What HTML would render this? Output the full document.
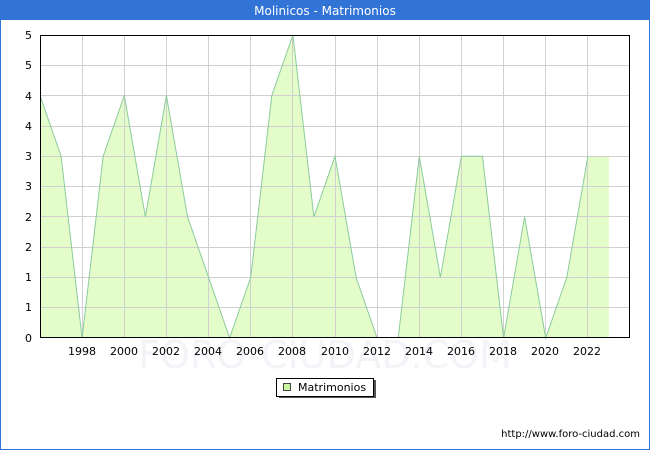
<!DOCTYPE html>
<html><head><style>
html,body{margin:0;padding:0;width:650px;height:450px;overflow:hidden;background:#fff;font-family:"DejaVu Sans","Liberation Sans",sans-serif;}
</style></head><body>
<svg width="650" height="450" xmlns="http://www.w3.org/2000/svg" font-family="DejaVu Sans, Liberation Sans, sans-serif">
<rect x="0" y="0" width="650" height="450" fill="#fff"/>
<rect x="0.5" y="0.5" width="649" height="449" fill="none" stroke="#3273d6" stroke-width="1"/>
<rect x="0" y="0" width="650" height="20" fill="#3273d6"/>
<text x="325" y="15" fill="#fff" font-size="12" text-anchor="middle">Molinicos - Matrimonios</text>
<text x="325" y="368" fill="#f3f3f8" font-size="38" text-anchor="middle">FORO-CIUDAD.COM</text>
<polygon fill="#e3fcca" points="40,95.6 61.1,156.2 82.1,338 103.2,156.2 124.3,95.6 145.4,216.8 166.4,95.6 187.5,216.8 208.6,277.4 229.6,338 250.7,277.4 271.8,95.6 292.9,35 313.9,216.8 335,156.2 356.1,277.4 377.1,338 398.2,338 419.3,156.2 440.4,277.4 461.4,156.2 482.5,156.2 503.6,338 524.6,216.8 545.7,338 566.8,277.4 587.9,156.2 608.9,156.2 608.9,338 40,338"/>
<g stroke="#d0d0d0" stroke-width="1">
<line x1="40" x2="630" y1="65.5" y2="65.5"/><line x1="40" x2="630" y1="95.5" y2="95.5"/><line x1="40" x2="630" y1="126.5" y2="126.5"/><line x1="40" x2="630" y1="156.5" y2="156.5"/><line x1="40" x2="630" y1="186.5" y2="186.5"/><line x1="40" x2="630" y1="216.5" y2="216.5"/><line x1="40" x2="630" y1="247.5" y2="247.5"/><line x1="40" x2="630" y1="277.5" y2="277.5"/><line x1="40" x2="630" y1="307.5" y2="307.5"/>
<line y1="35" y2="338" x1="82.5" x2="82.5"/><line y1="35" y2="338" x1="124.5" x2="124.5"/><line y1="35" y2="338" x1="166.5" x2="166.5"/><line y1="35" y2="338" x1="208.5" x2="208.5"/><line y1="35" y2="338" x1="250.5" x2="250.5"/><line y1="35" y2="338" x1="292.5" x2="292.5"/><line y1="35" y2="338" x1="335.5" x2="335.5"/><line y1="35" y2="338" x1="377.5" x2="377.5"/><line y1="35" y2="338" x1="419.5" x2="419.5"/><line y1="35" y2="338" x1="461.5" x2="461.5"/><line y1="35" y2="338" x1="503.5" x2="503.5"/><line y1="35" y2="338" x1="545.5" x2="545.5"/><line y1="35" y2="338" x1="587.5" x2="587.5"/>
</g>
<polyline fill="none" stroke="#8ccb9c" stroke-width="1" points="40,95.6 61.1,156.2 82.1,338 103.2,156.2 124.3,95.6 145.4,216.8 166.4,95.6 187.5,216.8 208.6,277.4 229.6,338 250.7,277.4 271.8,95.6 292.9,35 313.9,216.8 335,156.2 356.1,277.4 377.1,338"/>
<polyline fill="none" stroke="#8ccb9c" stroke-width="1" points="398.2,338 419.3,156.2 440.4,277.4 461.4,156.2 482.5,156.2 503.6,338 524.6,216.8 545.7,338 566.8,277.4 587.9,156.2"/>
<rect x="40.5" y="35.5" width="589" height="302" fill="none" stroke="#000" stroke-width="1"/>
<g font-size="11" fill="#000" text-anchor="end">
<text x="32" y="39">5</text><text x="32" y="69">5</text><text x="32" y="100">4</text><text x="32" y="130">4</text><text x="32" y="160">3</text><text x="32" y="190">3</text><text x="32" y="221">2</text><text x="32" y="251">2</text><text x="32" y="281">1</text><text x="32" y="311">1</text><text x="32" y="342">0</text>
</g>
<g font-size="11" fill="#000" text-anchor="middle">
<text x="82" y="355">1998</text><text x="124" y="355">2000</text><text x="166" y="355">2002</text><text x="208" y="355">2004</text><text x="250" y="355">2006</text><text x="292" y="355">2008</text><text x="335" y="355">2010</text><text x="377" y="355">2012</text><text x="419" y="355">2014</text><text x="461" y="355">2016</text><text x="503" y="355">2018</text><text x="545" y="355">2020</text><text x="587" y="355">2022</text>
</g>
<rect x="279" y="380" width="97" height="18" fill="#555"/>
<rect x="276.5" y="378.5" width="97" height="18" fill="#fff" stroke="#000" stroke-width="1"/>
<rect x="283.5" y="383.5" width="7" height="7" fill="#c8f5a0" stroke="#444" stroke-width="1"/>
<text x="298" y="391" font-size="11" fill="#000">Matrimonios</text>
<text x="640" y="437" font-size="10" fill="#000" text-anchor="end">http://www.foro-ciudad.com</text>
</svg>
</body></html>
